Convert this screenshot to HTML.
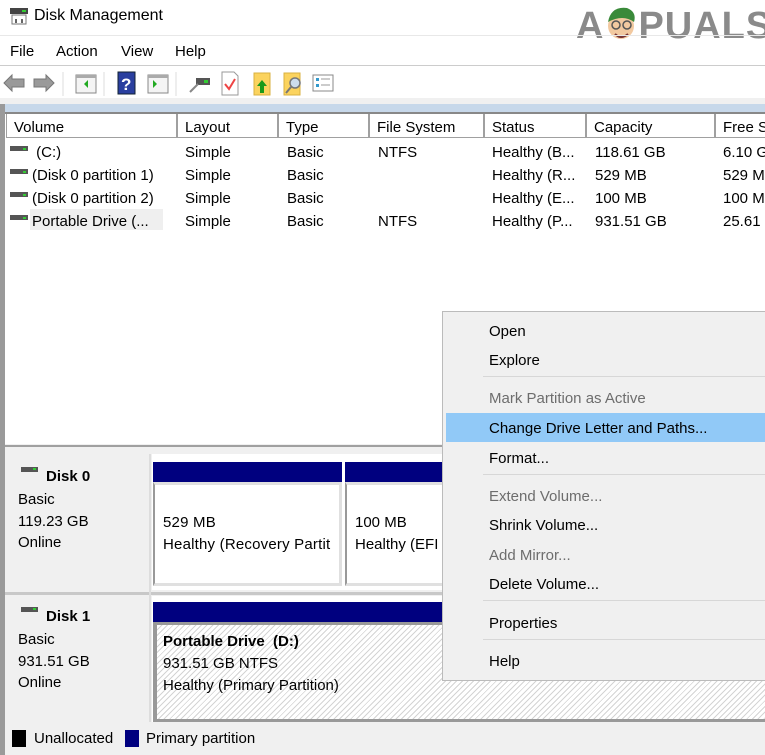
<!DOCTYPE html>
<html><head><meta charset="utf-8"><style>
*{margin:0;padding:0;box-sizing:border-box}
body{width:765px;height:755px;overflow:hidden;background:#fff;font-family:"Segoe UI","Liberation Sans",sans-serif;font-size:15px;color:#000;position:relative}
.a{position:absolute;white-space:nowrap}
.hd{position:absolute;top:114px;height:24px;border:1px solid #a0a0a0;border-top:none;background:#fff;padding-left:7px;line-height:27px}
.m{position:absolute;left:489px;line-height:20px}
.g{color:#6d6d6d}
.sep{position:absolute;left:483px;width:282px;height:1px;background:#d7d7d7}
.hatch{background:repeating-linear-gradient(135deg,#fff 0 3px,#d4d4d4 3px 4px)}
.blue{background:#00007f}
</style></head><body>
<svg class="a" style="left:9px;top:7px" width="20" height="18"><rect x="1" y="1" width="18" height="6" fill="#444"/><rect x="13" y="3" width="4" height="2" fill="#3c3"/><rect x="3" y="8" width="14" height="9" fill="#fff" stroke="#777"/><rect x="6" y="12" width="2" height="4" fill="#666"/><rect x="12" y="12" width="2" height="4" fill="#666"/></svg>
<div class="a" style="left:34px;top:7px;font-size:16px">Disk Management</div>
<div class="a" style="left:576px;top:5px;font-size:38px;font-weight:bold;color:#8a8a8a;letter-spacing:1px">A<span style="display:inline-block;width:34px"></span>PUALS</div>
<svg class="a" style="left:603px;top:4px" width="36" height="44"><circle cx="18" cy="22" r="13" fill="#f2c9a0"/><path d="M5 18 Q8 2 24 4 Q34 8 31 18 Q20 10 5 18Z" fill="#3a8a3a"/><circle cx="13" cy="21" r="4" fill="none" stroke="#555" stroke-width="1.5"/><circle cx="24" cy="21" r="4" fill="none" stroke="#555" stroke-width="1.5"/><path d="M12 30 Q18 36 25 30" stroke="#733" stroke-width="2" fill="none"/></svg>
<div class="a" style="left:0;top:35px;width:765px;height:1px;background:#e8e8e8"></div>
<div class="a" style="left:10px;top:43px">File</div>
<div class="a" style="left:56px;top:43px">Action</div>
<div class="a" style="left:121px;top:43px">View</div>
<div class="a" style="left:175px;top:43px">Help</div>
<div class="a" style="left:0;top:65px;width:765px;height:1px;background:#ccc"></div>
<svg class="a" style="left:0;top:68px" width="340" height="30">
<path d="M4 15 L12 7 V11 H24 V19 H12 V23Z" fill="#9a9a9a" stroke="#777"/>
<path d="M54 15 L46 7 V11 H34 V19 H46 V23Z" fill="#9a9a9a" stroke="#777"/>
<line x1="63" y1="4" x2="63" y2="28" stroke="#ddd"/>
<rect x="76" y="7" width="20" height="18" fill="#f4f4f4" stroke="#888"/><rect x="76" y="7" width="20" height="3" fill="#aaa"/><path d="M88 12 L84 16 L88 20Z" fill="#2a2"/>
<line x1="104" y1="4" x2="104" y2="28" stroke="#ddd"/>
<rect x="118" y="4" width="17" height="22" fill="#2a3f9f" stroke="#123"/><text x="121" y="22" fill="#fff" font-size="17" font-weight="bold" font-family="Liberation Sans">?</text>
<rect x="148" y="7" width="20" height="18" fill="#f4f4f4" stroke="#888"/><rect x="148" y="7" width="20" height="3" fill="#aaa"/><path d="M153 12 L157 16 L153 20Z" fill="#2a2"/>
<line x1="176" y1="4" x2="176" y2="28" stroke="#ddd"/>
<rect x="196" y="10" width="14" height="7" fill="#555"/><rect x="204" y="12" width="4" height="3" fill="#3c3"/><line x1="190" y1="24" x2="198" y2="16" stroke="#888" stroke-width="2"/>
<path d="M222 4 H234 L238 8 V27 H222Z" fill="#fff" stroke="#999"/><path d="M225 16 L229 21 L235 11" stroke="#e44" stroke-width="2" fill="none"/>
<rect x="254" y="5" width="16" height="22" fill="#fbd35e" stroke="#d9b040"/><path d="M262 12 L257 18 H260 V25 H264 V18 H267Z" fill="#1a9a1a"/>
<rect x="284" y="5" width="16" height="22" fill="#fbd35e" stroke="#d9b040"/><circle cx="295" cy="15" r="5" fill="#cde" stroke="#777" stroke-width="1.5"/><line x1="291" y1="19" x2="286" y2="25" stroke="#777" stroke-width="2"/>
<rect x="313" y="7" width="20" height="16" fill="#fff" stroke="#888"/><rect x="316" y="10" width="3" height="3" fill="#39c"/><rect x="316" y="16" width="3" height="3" fill="#39c"/><line x1="321" y1="11" x2="330" y2="11" stroke="#999"/><line x1="321" y1="17" x2="330" y2="17" stroke="#999"/>
</svg>
<div class="a" style="left:0;top:98px;width:765px;height:6px;background:#f0f0f0"></div>
<div class="a" style="left:0;top:104px;width:765px;height:8px;background:#c7d8ea"></div>
<div class="a" style="left:0;top:104px;width:5px;height:651px;background:#9a9a9a"></div>
<div class="a" style="left:5px;top:112px;width:760px;height:2px;background:#888"></div>
<div class="hd" style="left:6px;width:171px">Volume</div>
<div class="hd" style="left:177px;width:101px">Layout</div>
<div class="hd" style="left:278px;width:91px">Type</div>
<div class="hd" style="left:369px;width:115px">File System</div>
<div class="hd" style="left:484px;width:102px">Status</div>
<div class="hd" style="left:586px;width:129px">Capacity</div>
<div class="hd" style="left:715px;width:60px">Free S</div>
<div class="a" style="left:30px;top:209px;width:133px;height:21px;background:#efefef"></div>
<svg class="a" style="left:10px;top:146px" width="20" height="80">
<g fill="#555"><rect y="0" width="18" height="5"/><rect y="23" width="18" height="5"/><rect y="46" width="18" height="5"/><rect y="69" width="18" height="5"/></g>
<g fill="#3c3"><rect x="13" y="2" width="3" height="2"/><rect x="13" y="25" width="3" height="2"/><rect x="13" y="48" width="3" height="2"/><rect x="13" y="71" width="3" height="2"/></g></svg>
<div class="a" style="left:32px;top:141px;line-height:23px">&nbsp;(C:)<br>(Disk 0 partition 1)<br>(Disk 0 partition 2)<br>Portable Drive (...</div>
<div class="a" style="left:185px;top:141px;line-height:23px">Simple<br>Simple<br>Simple<br>Simple</div>
<div class="a" style="left:287px;top:141px;line-height:23px">Basic<br>Basic<br>Basic<br>Basic</div>
<div class="a" style="left:378px;top:141px;line-height:23px">NTFS<br><br><br>NTFS</div>
<div class="a" style="left:492px;top:141px;line-height:23px">Healthy (B...<br>Healthy (R...<br>Healthy (E...<br>Healthy (P...</div>
<div class="a" style="left:595px;top:141px;line-height:23px">118.61 GB<br>529 MB<br>100 MB<br>931.51 GB</div>
<div class="a" style="left:723px;top:141px;line-height:23px">6.10 G<br>529 M<br>100 M<br>25.61</div>
<div class="a" style="left:5px;top:444px;width:760px;height:311px;background:#f0f0f0"></div>
<div class="a" style="left:5px;top:445px;width:760px;height:2px;background:#a0a0a0"></div>
<div class="a" style="left:5px;top:592px;width:760px;height:3px;background:#c8c8c8"></div>
<div class="a" style="left:149px;top:454px;width:2px;height:268px;background:#ddd"></div>
<svg class="a" style="left:21px;top:467px" width="18" height="6"><rect width="17" height="5" fill="#555"/><rect x="12" y="1" width="3" height="2" fill="#3c3"/></svg>
<svg class="a" style="left:21px;top:607px" width="18" height="6"><rect width="17" height="5" fill="#555"/><rect x="12" y="1" width="3" height="2" fill="#3c3"/></svg>
<div class="a" style="left:46px;top:468px;font-weight:bold">Disk 0</div>
<div class="a" style="left:18px;top:489px;line-height:21.5px">Basic<br>119.23 GB<br>Online</div>
<div class="a" style="left:46px;top:608px;font-weight:bold">Disk 1</div>
<div class="a" style="left:18px;top:629px;line-height:21.5px">Basic<br>931.51 GB<br>Online</div>
<div class="a" style="left:152px;top:454px;width:613px;height:136px;background:#fff"></div>
<div class="a blue" style="left:153px;top:462px;width:189px;height:20px"></div>
<div class="a blue" style="left:345px;top:462px;width:100px;height:20px"></div>
<div class="a" style="left:153px;top:482px;width:189px;height:104px;border:3px solid #e0e0e0;background:#fff;border-left:2px solid #999"></div>
<div class="a" style="left:345px;top:482px;width:100px;height:104px;border:3px solid #e0e0e0;background:#fff;border-left:2px solid #999"></div>
<div class="a" style="left:163px;top:512px;line-height:22px;letter-spacing:0.2px">529 MB<br>Healthy (Recovery Partit</div>
<div class="a" style="left:355px;top:512px;line-height:22px">100 MB<br>Healthy (EFI</div>
<div class="a" style="left:152px;top:596px;width:613px;height:126px;background:#fff"></div>
<div class="a blue" style="left:153px;top:602px;width:612px;height:20px"></div>
<div class="a hatch" style="left:153px;top:622px;width:612px;height:100px;border:3px solid #999;border-right:none;border-left:4px solid #999"></div>
<div class="a" style="left:163px;top:631px;line-height:22px"><b>Portable Drive &nbsp;(D:)</b><br>931.51 GB NTFS<br>Healthy (Primary Partition)</div>
<div class="a" style="left:12px;top:730px;width:14px;height:17px;background:#000"></div>
<div class="a" style="left:34px;top:730px">Unallocated</div>
<div class="a" style="left:125px;top:730px;width:14px;height:17px;background:#00007f"></div>
<div class="a" style="left:146px;top:730px">Primary partition</div>
<div class="a" style="left:442px;top:311px;width:330px;height:370px;background:#f0f0f0;border:1px solid #bbb"></div>
<div class="a" style="left:446px;top:413px;width:319px;height:29px;background:#91c9f7"></div>
<div class="m" style="top:322px">Open</div>
<div class="m" style="top:351px">Explore</div>
<div class="sep" style="top:376px"></div>
<div class="m g" style="top:389px">Mark Partition as Active</div>
<div class="m" style="top:419px">Change Drive Letter and Paths...</div>
<div class="m" style="top:449px">Format...</div>
<div class="sep" style="top:474px"></div>
<div class="m g" style="top:487px">Extend Volume...</div>
<div class="m" style="top:516px">Shrink Volume...</div>
<div class="m g" style="top:546px">Add Mirror...</div>
<div class="m" style="top:575px">Delete Volume...</div>
<div class="sep" style="top:600px"></div>
<div class="m" style="top:614px">Properties</div>
<div class="sep" style="top:639px"></div>
<div class="m" style="top:652px">Help</div>
</body></html>
